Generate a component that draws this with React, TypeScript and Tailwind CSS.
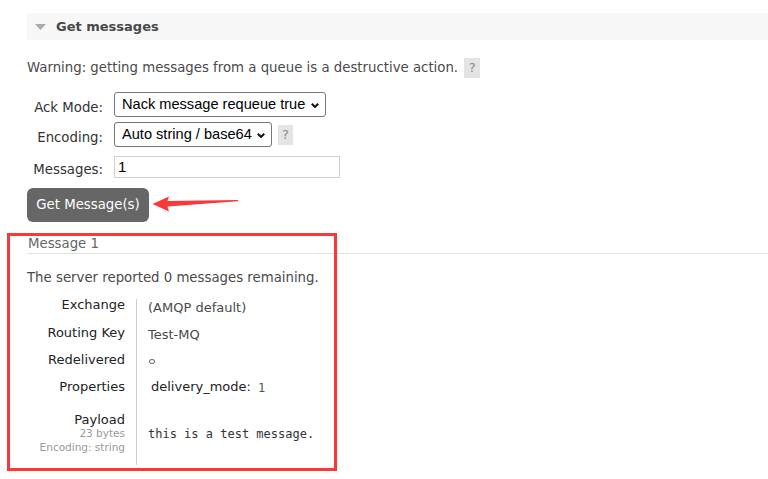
import React from "react";

const Help = ({ className = "" }: { className?: string }) => (
  <span
    className={`inline-flex items-center justify-center bg-[#e4e4e4] text-[#8a8a8a] text-[13px] ${className}`}
  >
    ?
  </span>
);

const Chevron = () => (
  <svg
    className="pointer-events-none absolute right-[7px] top-[11px]"
    width="8"
    height="5"
    viewBox="0 0 8 5"
  >
    <path d="M0.8 0.8 L4 4 L7.2 0.8" fill="none" stroke="#111" strokeWidth="2" />
  </svg>
);

const Select = ({ width, options }: { width: string; options: string[] }) => (
  <div className={`relative ${width}`}>
    <select
      className="h-[25px] w-full appearance-none rounded-[3px] border border-[#767676] bg-white pl-[7px] pr-[12px] text-[14.6px] leading-[23px] text-black outline-none"
      style={{ fontFamily: '"Liberation Sans", Arial, sans-serif' }}
      defaultValue={options[0]}
    >
      {options.map((o) => (
        <option key={o}>{o}</option>
      ))}
    </select>
    <Chevron />
  </div>
);

const FormRow = ({ label, children, className = "" }: { label: string; children: React.ReactNode; className?: string }) => (
  <div className={`flex items-center ${className}`}>
    <label className="w-[76px] shrink-0 pt-[6px] text-right text-[13.3px] leading-[14px] text-[#333]">{label}</label>
    <div className="ml-[11px] flex items-center">{children}</div>
  </div>
);

export default function App() {
  return (
    <div
      className="relative h-[479px] w-[768px] overflow-hidden bg-white text-[13px] text-[#4a4a4a]"
      style={{ fontFamily: '"DejaVu Sans", Verdana, sans-serif' }}
    >
      {/* section header */}
      <div className="ml-[27px] mt-[13px] flex h-[27px] items-center bg-[#f7f7f7] pl-[8px] pt-[1px]">
        <svg width="11" height="6" viewBox="0 0 11 6">
          <path d="M0 0 H11 L5.5 6 Z" fill="#ababab" />
        </svg>
        <span className="ml-[10px] font-bold text-[#484848]">Get messages</span>
      </div>

      <div className="ml-[27px] mt-[18px] flex h-[20px] items-center">
        <span className="text-[13.3px]">Warning: getting messages from a queue is a destructive action.</span>
        <Help className="ml-[6px] h-[20px] w-[16px]" />
      </div>

      <div className="ml-[27px] mt-[14px] flex flex-col">
        <FormRow label="Ack Mode:">
          <Select
            width="w-[212px]"
            options={["Nack message requeue true", "Automatic ack", "Reject requeue true", "Reject requeue false"]}
          />
        </FormRow>
        <FormRow label="Encoding:" className="mt-[5px]">
          <Select width="w-[158px]" options={["Auto string / base64", "base64"]} />
          <Help className="ml-[6px] h-[20px] w-[15px]" />
        </FormRow>
        <FormRow label="Messages:" className="mt-[9px]">
          <input
            defaultValue="1"
            className="h-[22px] w-[226px] border border-[#cfcfcf] bg-white pl-[3px] text-[15px] text-black outline-none"
            style={{ fontFamily: '"Liberation Sans", Arial, sans-serif' }}
          />
        </FormRow>
      </div>

      <div className="ml-[27px] mt-[10px] flex items-start">
        <button className="h-[34px] w-[122px] rounded-[6px] bg-[#666666] text-[13.3px] text-white">
          Get Message(s)
        </button>
        <svg className="ml-[2px] mt-[8px]" width="88" height="17" viewBox="0 0 88 17">
          <path d="M1.5 8 L18 0.5 L16.5 5 L87 4 L87 5.2 L16.5 10.5 L18 15.5 Z" fill="#fb3737" />
        </svg>
      </div>

      <div className="ml-[27px] mt-[13px] h-[19px] border-b border-[#e2e2e2] pl-[1px] text-[13.3px] leading-[18px] text-[#666]">
        Message 1
      </div>

      <p className="ml-[27px] mt-[15px] text-[13.3px] leading-[18px]">The server reported 0 messages remaining.</p>

      {/* message details */}
      <div className="ml-[27px] mt-[12px] flex flex-col">
        <div className="flex h-[28px]">
          <div className="w-[109px] shrink-0 pr-[11px] text-right leading-[11px] text-[#222]">Exchange</div>
          <div className="flex-1 border-l border-[#cccccc] pl-[11px] pt-[3px] leading-[11px]">(AMQP default)</div>
        </div>
        <div className="flex h-[27px]">
          <div className="w-[109px] shrink-0 pr-[11px] text-right leading-[11px] text-[#222]">Routing Key</div>
          <div className="flex-1 border-l border-[#cccccc] pl-[11px] pt-[2px] leading-[11px]">Test-MQ</div>
        </div>
        <div className="flex h-[27px]">
          <div className="w-[109px] shrink-0 pr-[11px] text-right leading-[11px] text-[#222]">Redelivered</div>
          <div className="flex-1 border-l border-[#cccccc] pl-[12px] pt-[5px]">
            <div className="h-[5px] w-[6px] rounded-full border border-[#555]" />
          </div>
        </div>
        <div className="flex h-[33px]">
          <div className="w-[109px] shrink-0 pr-[11px] text-right leading-[11px] text-[#222]">Properties</div>
          <div className="flex flex-1 items-start border-l border-[#cccccc] pl-[14px] leading-[11px]">
            <span className="text-[#222]">delivery_mode:</span>
            <span
              className="ml-[7px] mt-[2px] text-[12px] text-[#555]"
              style={{ fontFamily: '"DejaVu Sans Mono", monospace' }}
            >
              1
            </span>
          </div>
        </div>
        <div className="flex h-[51px]">
          <div className="flex w-[109px] shrink-0 flex-col items-end pr-[11px]">
            <span className="leading-[11px] text-[#222]">Payload</span>
            <span className="mt-[1px] text-[10.5px] leading-[14px] text-[#999]">23 bytes</span>
            <span className="text-[10.5px] leading-[14px] text-[#999]">Encoding: string</span>
          </div>
          <div
            className="flex-1 border-l border-[#cccccc] pl-[11px] pt-[12px] text-[12px] leading-[16px] text-[#333]"
            style={{ fontFamily: '"DejaVu Sans Mono", monospace' }}
          >
            this is a test message.
          </div>
        </div>
      </div>

      {/* highlight frame */}
      <div className="pointer-events-none absolute left-[7px] top-[233px] h-[238px] w-[330px] border-[3px] border-[#fb3737]" />
    </div>
  );
}
